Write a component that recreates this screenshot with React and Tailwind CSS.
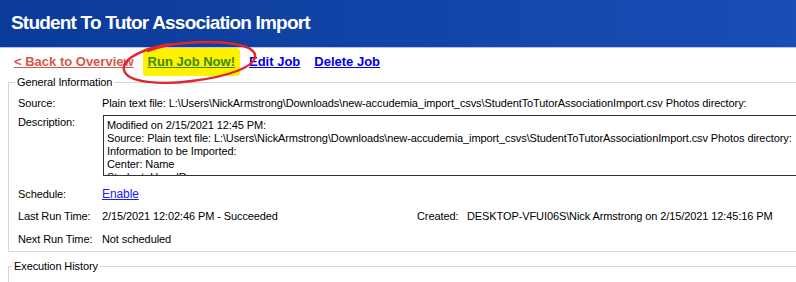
const sourcePath =
  'Plain text file: L:\\Users\\NickArmstrong\\Downloads\\new-accudemia_import_csvs\\StudentToTutorAssociationImport.csv Photos directory:';

const descriptionLines = [
  'Modified on 2/15/2021 12:45 PM:',
  'Source: ' + sourcePath,
  'Information to be Imported:',
  'Center: Name',
  'Student: User ID',
];

const Row = ({ label, children, className = '' }) => (
  <div className={`flex h-[14px] items-center leading-[14px] ${className}`}>
    <span className="w-[84px] shrink-0">{label}</span>
    {children}
  </div>
);

const App = () => {
  return (
    <div
      className="relative h-[282px] w-[796px] overflow-hidden bg-white text-[11px] tracking-[-0.1px] text-black"
      style={{ fontFamily: '"Liberation Sans", Arial, sans-serif' }}
    >
      <div className="flex h-[47px] items-center bg-gradient-to-r from-[#0a3b9a] to-[#1a4db5] pl-[11px]">
        <h1 className="text-[19px] font-bold tracking-[-0.8px] text-white">
          Student To Tutor Association Import
        </h1>
      </div>
      <div className="h-px bg-[#b4c6ec]" />

      <div className="relative flex h-[28px] items-center gap-[14px] pl-[14px] text-[13px] font-bold tracking-normal">
        <a href="#" className="text-[#d5574d] underline">
          &lt; Back to Overview
        </a>
        <a
          href="#"
          className="-mx-[5px] rounded-[3px] bg-[#fff200] px-[5px] py-[4px] text-[#3a8a00] underline"
        >
          Run Job Now!
        </a>
        <a href="#" className="text-[#0000ee] underline">
          Edit Job
        </a>
        <a href="#" className="text-[#0000ee] underline">
          Delete Job
        </a>
        <svg
          className="pointer-events-none absolute left-0 top-[-48px]"
          width="300"
          height="100"
          viewBox="0 0 300 100"
        >
          <path
            d="M176 44 C150 45 121 58 124 70 C127 83 162 85 192 81 C226 77 257 67 255 55 C253 44 222 40 186 43 C170 44 158 47 148 51"
            fill="none"
            stroke="#e3242b"
            strokeWidth="2.4"
            strokeLinecap="round"
          />
        </svg>
      </div>

      <fieldset className="ml-[8px] mt-[-1px] w-[800px] border border-[#d7d7d7] pb-[5px] pl-[9px]">
        <legend className="ml-[-3px] px-[2px] leading-[14px]">General Information</legend>
        <Row label="Source:" className="mt-[7px]">
          <span className="whitespace-nowrap">{sourcePath}</span>
        </Row>
        <div className="mt-[5px] flex">
          <span className="w-[84px] shrink-0 leading-[14px]">Description:</span>
          <div className="ml-px h-[61px] w-[720px] overflow-hidden border border-[#333] pl-[3px] pt-[3px]">
            {descriptionLines.map((line) => (
              <div key={line} className="whitespace-nowrap leading-[13px]">
                {line}
              </div>
            ))}
          </div>
        </div>
        <Row label="Schedule:" className="mt-[11px]">
          <a href="#" className="text-[12px] text-[#1a1aff] underline">
            Enable
          </a>
        </Row>
        <Row label="Last Run Time:" className="mt-[8px]">
          <span className="w-[315px] shrink-0">2/15/2021 12:02:46 PM - Succeeded</span>
          <span className="w-[50px] shrink-0">Created:</span>
          <span>DESKTOP-VFUI06S\Nick Armstrong on 2/15/2021 12:45:16 PM</span>
        </Row>
        <Row label="Next Run Time:" className="mt-[9px]">
          <span>Not scheduled</span>
        </Row>
      </fieldset>

      <fieldset className="ml-[8px] mt-[7px] h-[40px] w-[800px] border border-[#d7d7d7]">
        <legend className="ml-[3px] px-[2px] leading-[14px]">Execution History</legend>
      </fieldset>
    </div>
  );
};

export default App;
